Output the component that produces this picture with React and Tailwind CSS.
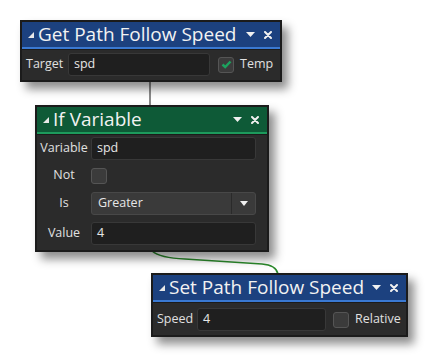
import React from 'react';

const font = { fontFamily: '"Open Sans", "Noto Sans", sans-serif' };

// small up-right corner triangle used as collapse toggle
const Collapse = () => (
  <svg width="6" height="6" viewBox="0 0 6 6" className="shrink-0">
    <polygon points="6,0 6,6 0,6" fill="#e8e8e8" />
  </svg>
);

const TitleIcons = () => (
  <div className="ml-auto flex items-center gap-[9px] pr-[8px]">
    <svg width="9" height="5" viewBox="0 0 9 5">
      <polygon points="0,0 9,0 4.5,5" fill="#f0f0f0" />
    </svg>
    <svg width="8" height="8" viewBox="0 0 8 8">
      <path d="M1 1 L7 7 M7 1 L1 7" stroke="#f0f0f0" strokeWidth="2" strokeLinecap="round" />
    </svg>
  </div>
);

const Node = ({ title, color, line, className, children }) => (
  <div className={`absolute border-2 border-[#1b1b1b] bg-[#2b2b2b] shadow-[6px_7px_9px_rgba(0,0,0,0.45)] ${className}`}>
    <div className={`h-[25px] flex items-center pl-[6px] ${color}`}>
      <Collapse />
      <span className="ml-[4px] text-[19px] leading-none text-[#f2f2f2] whitespace-nowrap">{title}</span>
      <TitleIcons />
    </div>
    <div className={`h-[2px] ${line}`} />
    <div className="h-px bg-[#1b1b1b]" />
    {children}
  </div>
);

const Input = ({ value, className }) => (
  <div className={`h-[23px] rounded-[3px] border border-[#383838] bg-[#1f1f1f] flex items-center px-[5px] text-[12.5px] text-[#e6e6e6] ${className}`}>
    {value}
  </div>
);

const Check = ({ checked }) => (
  <div className="w-[16px] h-[16px] rounded-[3px] border border-[#555] bg-[#3b3b3b] flex items-center justify-center shrink-0">
    {checked && (
      <svg width="11" height="9" viewBox="0 0 11 9">
        <path d="M1.5 4.5 L4.2 7 L9.5 1.5" stroke="#1ca25e" strokeWidth="2.4" fill="none" />
      </svg>
    )}
  </div>
);

const Label = ({ children }) => (
  <div className="w-[54px] text-center text-[12.5px] text-[#e0e0e0] shrink-0">{children}</div>
);

export default function App() {
  return (
    <div className="relative w-[428px] h-[356px] bg-white overflow-hidden" style={font}>
      {/* connectors */}
      <svg className="absolute left-0 top-0" width="428" height="356">
        <line x1="150" y1="80" x2="150" y2="106" stroke="#8a8a8a" strokeWidth="2" />
        <path
          d="M152 251 Q160 258 185 259 L262 264 Q276 265 278 274"
          stroke="#2b8a2b"
          strokeWidth="1.5"
          fill="none"
        />
      </svg>

      <Node title="Get Path Follow Speed" color="bg-[#1c417f]" line="bg-[#3a79d2]" className="left-[20px] top-[20px] w-[262px] h-[62px]">
        <div className="flex items-center h-[29px] pl-[4px]">
          <span className="text-[12.5px] text-[#e0e0e0] w-[42px]">Target</span>
          <Input value="spd" className="w-[142px]" />
          <div className="ml-[8px]"><Check checked /></div>
          <span className="ml-[6px] text-[12.5px] text-[#e0e0e0]">Temp</span>
        </div>
      </Node>

      <Node title="If Variable" color="bg-[#0e5a37]" line="bg-[#1d9a5c]" className="left-[35px] top-[105px] w-[234px] h-[147px]">
        <div className="flex flex-col">
          <div className="flex items-center h-[27px]">
            <Label>Variable</Label>
            <Input value="spd" className="w-[165px]" />
          </div>
          <div className="flex items-center h-[27px]">
            <Label>Not</Label>
            <Check />
          </div>
          <div className="flex items-center h-[28px]">
            <Label>Is</Label>
            <div className="w-[165px] h-[23px] rounded-[3px] border border-[#484848] bg-[#3a3a3a] flex">
              <span className="flex-1 px-[6px] flex items-center text-[12.5px] text-[#e6e6e6]">Greater</span>
              <div className="w-[24px] border-l border-[#2a2a2a] flex items-center justify-center">
                <svg width="8" height="5" viewBox="0 0 8 5">
                  <polygon points="0,0 8,0 4,5" fill="#f0f0f0" />
                </svg>
              </div>
            </div>
          </div>
          <div className="flex items-center h-[32px]">
            <Label>Value</Label>
            <Input value="4" className="w-[165px]" />
          </div>
        </div>
      </Node>

      <Node title="Set Path Follow Speed" color="bg-[#1c417f]" line="bg-[#3a79d2]" className="left-[151px] top-[273px] w-[257px] h-[64px]">
        <div className="flex items-center h-[33px] pl-[4px]">
          <span className="text-[12.5px] text-[#e0e0e0] w-[40px]">Speed</span>
          <Input value="4" className="w-[129px]" />
          <div className="ml-[7px]"><Check /></div>
          <span className="ml-[6px] text-[12.5px] text-[#e0e0e0]">Relative</span>
        </div>
      </Node>
    </div>
  );
}
